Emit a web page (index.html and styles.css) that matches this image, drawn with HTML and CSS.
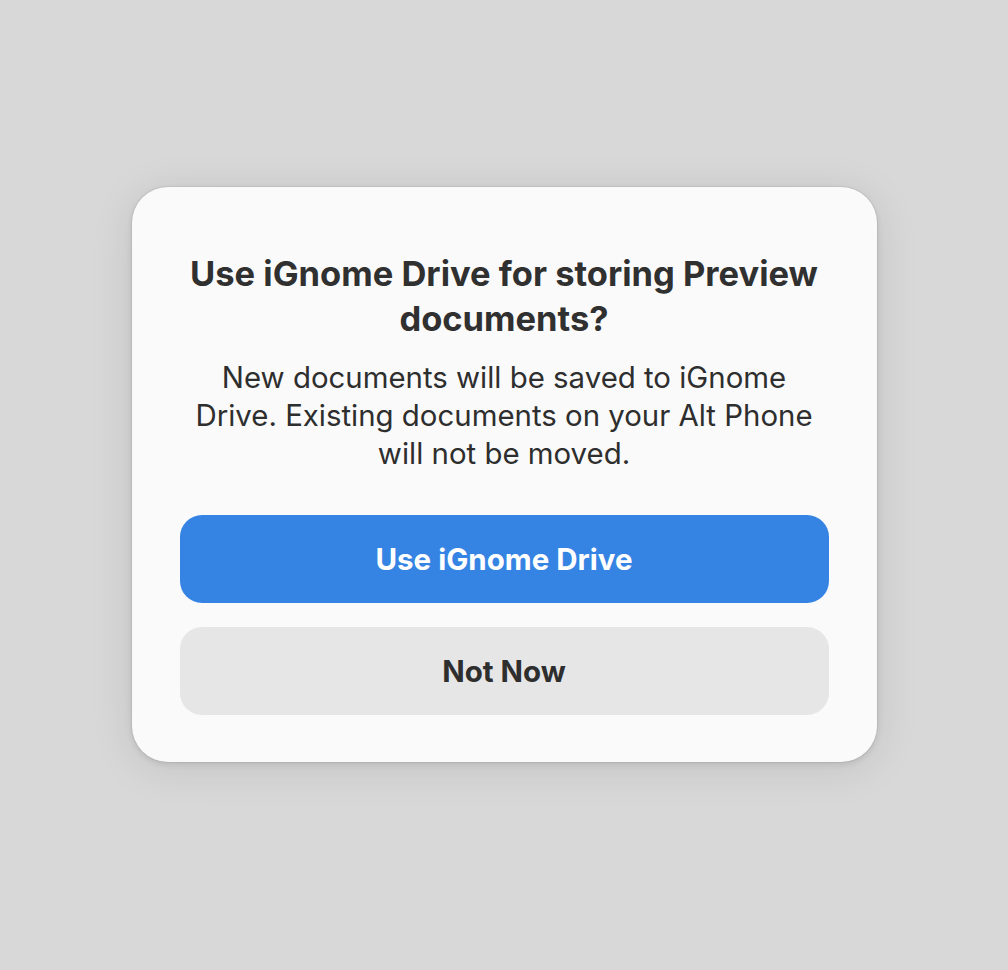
FILE: index.html
```html
<!DOCTYPE html>
<html>
<head>
  <title>iGnome Drive</title>
  <link rel="stylesheet" href="styles.css">
</head>
<body>
  <div class="dialog">
    <h1 class="dialog-title">Use iGnome Drive for storing Preview documents?</h1>
    <p class="dialog-body">New documents will be saved to iGnome Drive. Existing documents on your Alt Phone will not be moved.</p>
    <div class="dialog-buttons">
      <button class="btn btn-primary">Use iGnome Drive</button>
      <button class="btn btn-secondary">Not Now</button>
    </div>
  </div>
</body>
</html>
```

FILE: styles.css
```css
html, body {
  margin: 0;
  height: 100%;
}

body {
  background-color: #d8d8d8;
  font-family: Inter, "Noto Sans", sans-serif;
  color: #2e2e2e;
  display: flex;
  justify-content: center;
  align-items: flex-start;
  padding-top: 187px;
  box-sizing: border-box;
}

.dialog {
  width: 745px;
  box-sizing: border-box;
  background-color: #fafafa;
  border-radius: 36px;
  padding: 64px 48px 47px;
  text-align: center;
  box-shadow: 0 0 0 1px rgba(0, 0, 0, 0.05), 0 2px 6px rgba(0, 0, 0, 0.1), 0 6px 44px rgba(0, 0, 0, 0.1);
}

.dialog-title {
  margin: 0 0 18px;
  font-size: 34.5px;
  line-height: 45px;
  font-weight: 700;
  color: #303030;
}

.dialog-body {
  margin: 0 auto 42px;
  max-width: 630px;
  font-size: 29.4px;
  line-height: 38px;
  font-weight: 400;
}

.dialog-buttons {
  display: flex;
  flex-direction: column;
  gap: 24px;
}

.btn {
  height: 88px;
  border: none;
  border-radius: 22px;
  font-family: inherit;
  font-size: 29.5px;
  font-weight: 700;
}

.btn-primary {
  background-color: #3584e4;
  color: #ffffff;
}

.btn-secondary {
  background-color: #e6e6e6;
  color: #2e2e2e;
}
```
